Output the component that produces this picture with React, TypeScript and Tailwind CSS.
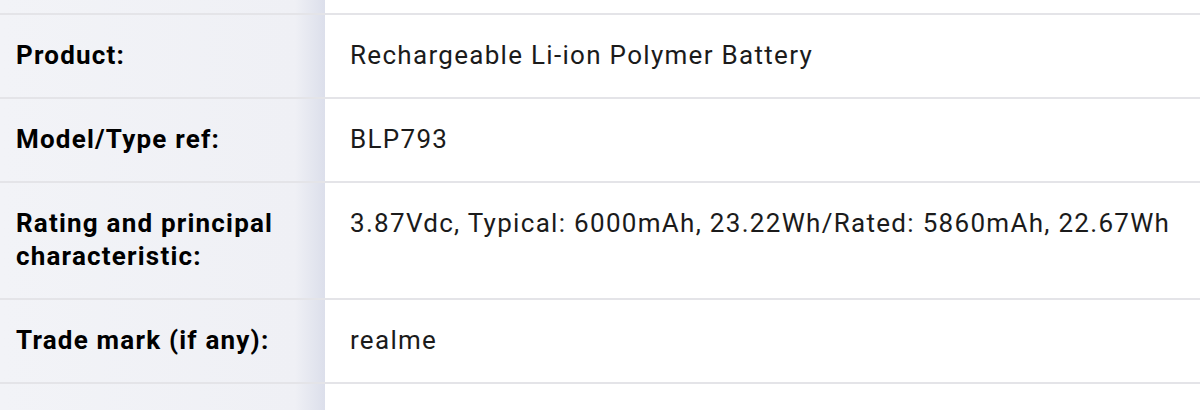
// Battery spec table — label / value rows

const rows: { label: string; value: string }[] = [
  { label: 'Product:', value: 'Rechargeable Li-ion Polymer Battery' },
  { label: 'Model/Type ref:', value: 'BLP793' },
  {
    label: 'Rating and principal characteristic:',
    value: '3.87Vdc, Typical: 6000mAh, 23.22Wh/Rated: 5860mAh, 22.67Wh',
  },
  { label: 'Trade mark (if any):', value: 'realme' },
];

const leftBg =
  'bg-[linear-gradient(to_right,#f2f3f7_0px,#eff0f5_295px,#dcdfeb_325px)]';

export default function App() {
  return (
    <div className="w-[1200px] h-[410px] overflow-hidden bg-white font-['Roboto',sans-serif] text-[26px] leading-[33px] tracking-[1.3px] text-[#1b1b1b]">
      {/* partial row above */}
      <Row label="" value="" className="h-[15px]" />

      {rows.map((r) => (
        <Row key={r.label} label={r.label} value={r.value} />
      ))}

      {/* partial row below */}
      <div className="flex h-[40px]">
        <div className={`w-[325px] shrink-0 ${leftBg}`} />
        <div className="flex-1" />
      </div>
    </div>
  );
}

function Row({
  label,
  value,
  className,
}: {
  label: string;
  value: string;
  className?: string;
}) {
  const filler = className !== undefined;
  return (
    <div className={`flex border-b-2 border-[#e4e4e8] ${className ?? ''}`}>
      <div
        className={`w-[325px] shrink-0 ${leftBg} ${
          filler ? '' : 'pl-4 pr-6 pt-6 pb-[25px]'
        } font-bold text-black tracking-[1.2px]`}
      >
        {label}
      </div>
      <div className={`flex-1 ${filler ? '' : 'pl-[25px] pt-6 pb-[25px]'}`}>
        {value}
      </div>
    </div>
  );
}
